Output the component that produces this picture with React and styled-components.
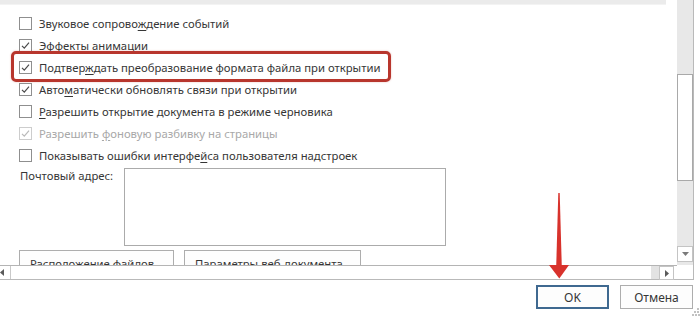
import React from "react";
import styled, { createGlobalStyle, css } from "styled-components";

const Global = createGlobalStyle`
  html, body { margin: 0; padding: 0; background: #fff; }
  body {
    font-family: "Noto Sans", "Open Sans", sans-serif;
    font-size: 11.3px;
    color: #363636;
    width: 700px;
    height: 317px;
    overflow: hidden;
  }
`;

const Window = styled.div`
  position: relative;
  width: 700px;
  height: 317px;
  display: flex;
  flex-direction: column;
`;

const Pane = styled.div`
  width: 693px;
  display: grid;
  grid-template-columns: 677px 16px;
  grid-template-rows: 265px 14px;
  border-right: 1px solid #b9b9b9;
  border-bottom: 1px solid #b9b9b9;
  flex: none;
`;

const Content = styled.div`
  overflow: hidden;
  display: flex;
  flex-direction: column;

  & > * {
    flex-shrink: 0;
  }
`;

const TopStrip = styled.div`
  width: 666px;
  height: 4px;
  background: #ebebeb;
  border-bottom: 1px solid #f3f3f3;
  margin-bottom: 7px;
`;

const List = styled.div`
  display: flex;
  flex-direction: column;
  padding-left: 19px;
`;

const Row = styled.label`
  position: relative;
  display: flex;
  align-items: center;
  gap: 7px;
  height: 22px;
  flex: none;
  white-space: nowrap;
  color: ${(p) => (p.$disabled ? "#a8a8a8" : "#363636")};
  ${(p) =>
    p.$highlight &&
    css`
      &::after {
        content: "";
        position: absolute;
        left: -8px;
        top: -5px;
        width: 374px;
        height: 25px;
        border: 3px solid #b8362d;
        border-radius: 5px;
        box-shadow: 0 0 2px rgba(184, 54, 45, 0.35);
      }
    `}
`;

const Box = styled.span`
  width: 11px;
  height: 11px;
  flex: none;
  border: 1px solid ${(p) => (p.$disabled ? "#cdcdcd" : "#8f8f8f")};
  background: #fff;
  display: flex;
  align-items: center;
  justify-content: center;
`;

const Key = styled.span`
  text-decoration: underline;
  text-underline-offset: 2px;
`;

const MailRow = styled.div`
  display: flex;
  align-items: flex-start;
  margin-top: 2px;
  padding-left: 20px;
`;

const MailLabel = styled.span`
  width: 104px;
  line-height: 16px;
`;

const MailBox = styled.div`
  width: 320px;
  height: 76px;
  border: 1px solid #ababab;
  background: #fff;
`;

const ButtonRow = styled.div`
  display: flex;
  gap: 10px;
  padding-left: 19px;
  margin-top: 4px;
`;

const PaneButton = styled.div`
  width: ${(p) => p.$w}px;
  height: 22px;
  border: 1px solid #adadad;
  background: #fdfdfd;
  box-sizing: border-box;
  flex: none;
  padding: 5px 0 0 10px;
  white-space: nowrap;
  overflow: hidden;
`;

const VScroll = styled.div`
  background: #e8e8e8;
  display: flex;
  flex-direction: column;
`;

const VThumb = styled.div`
  margin-top: 74px;
  height: 105px;
  width: 14px;
  border: 1px solid #a9a9a9;
  background: #fff;
`;

const ArrowButton = styled.div`
  width: ${(p) => p.$w}px;
  height: ${(p) => p.$h}px;
  box-sizing: border-box;
  border: 1px solid #c4c4c4;
  background: #fff;
  display: flex;
  align-items: center;
  justify-content: center;
  flex: none;
`;

const Spacer = styled.div`
  flex: ${(p) => p.$size ? `0 0 ${p.$size}px` : 1};
`;

const HScroll = styled.div`
  display: flex;
  align-items: stretch;
  border-top: 1px solid #b4b4b4;
`;

const HLeft = styled.div`
  width: 10px;
  border-right: 1px solid #c9c9c9;
  display: flex;
  align-items: center;
  justify-content: flex-start;
  flex: none;
`;

const HThumb = styled.div`
  flex: 1;
  background: #fff;
`;

const HTrack = styled.div`
  width: 8px;
  background: #e3e3e3;
  flex: none;
`;

const Corner = styled.div`
  background: #fff;
`;

const Footer = styled.div`
  display: flex;
  justify-content: flex-end;
  gap: 11px;
  padding: 5px 7px 0 0;
`;

const DialogButton = styled.button`
  width: 73px;
  height: 24px;
  box-sizing: border-box;
  font: inherit;
  font-size: 12px;
  color: #363636;
  background: #fdfdfd;
  border: ${(p) => (p.$primary ? "2px solid #3f6990" : "1px solid #adadad")};
  padding: 0;
`;

const Grip = styled.svg`
  position: absolute;
  right: 0;
  bottom: 1px;
`;

const Pointer = styled.svg`
  position: absolute;
  left: 547px;
  top: 191px;
`;

const Check = ({ disabled }) => (
  <svg width="11" height="11" viewBox="0 0 11 11">
    <path
      d="M2 5.8 L4.3 8.2 L9 2.6"
      fill="none"
      stroke={disabled ? "#b9b9b9" : "#4a4a4a"}
      strokeWidth="1.2"
    />
  </svg>
);

const Option = ({ checked, disabled, highlight, children }) => (
  <Row $disabled={disabled} $highlight={highlight}>
    <Box $disabled={disabled}>{checked && <Check disabled={disabled} />}</Box>
    <span>{children}</span>
  </Row>
);

export default function App() {
  return (
    <Window>
      <Global />
      <Pane>
        <Content>
          <TopStrip />
          <List>
            <Option>
              Звуковое сопрово<Key>ж</Key>дение событий
            </Option>
            <Option checked>Эффекты анимации</Option>
            <Option checked highlight>
              Подтвер<Key>ж</Key>дать преобразование формата файла при открытии
            </Option>
            <Option checked>
              Авто<Key>м</Key>атически обновлять связи при открытии
            </Option>
            <Option>
              <Key>Р</Key>азрешить открытие документа в режиме черновика
            </Option>
            <Option checked disabled>
              Разрешить <Key>ф</Key>оновую разбивку на страницы
            </Option>
            <Option>
              Показывать ошибки интерфе<Key>й</Key>са пользователя надстроек
            </Option>
          </List>
          <MailRow>
            <MailLabel>Почтовый адрес:</MailLabel>
            <MailBox />
          </MailRow>
          <ButtonRow>
            <PaneButton $w={155}>Расположение файлов...</PaneButton>
            <PaneButton $w={177}>Параметры веб-документа...</PaneButton>
          </ButtonRow>
        </Content>
        <VScroll>
          <VThumb />
          <Spacer />
          <ArrowButton $w={16} $h={16} style={{ marginBottom: 3 }}>
            <svg width="7" height="4" viewBox="0 0 7 4">
              <path d="M0 0 H7 L3.5 4 Z" fill="#7a7a7a" />
            </svg>
          </ArrowButton>
        </VScroll>
        <HScroll>
          <HLeft>
            <svg width="4" height="7" viewBox="0 0 4 7">
              <path d="M4 0 V7 L0 3.5 Z" fill="#5a5a5a" />
            </svg>
          </HLeft>
          <HThumb />
          <HTrack />
          <ArrowButton $w={15} $h={14}>
            <svg width="4" height="7" viewBox="0 0 4 7">
              <path d="M0 0 V7 L4 3.5 Z" fill="#5a5a5a" />
            </svg>
          </ArrowButton>
          <Spacer $size={3} />
        </HScroll>
        <Corner />
      </Pane>
      <Footer>
        <DialogButton $primary>OK</DialogButton>
        <DialogButton>Отмена</DialogButton>
      </Footer>
      <Pointer width="26" height="90" viewBox="0 0 26 90">
        <path d="M11.3 2 L12.7 2 L14.8 76 L9.2 76 Z" fill="#d8322c" />
        <path d="M2 74 L22 74 L12.3 87.5 Z" fill="#d8322c" />
      </Pointer>
      <Grip width="8" height="9" viewBox="0 0 8 9">
        <g fill="#c2c2c2">
          <rect x="5" y="1" width="2" height="2" />
          <rect x="2" y="4" width="2" height="2" />
          <rect x="5" y="4" width="2" height="2" />
          <rect x="0" y="7" width="2" height="2" />
          <rect x="3" y="7" width="2" height="2" />
          <rect x="6" y="7" width="2" height="2" />
        </g>
      </Grip>
    </Window>
  );
}
